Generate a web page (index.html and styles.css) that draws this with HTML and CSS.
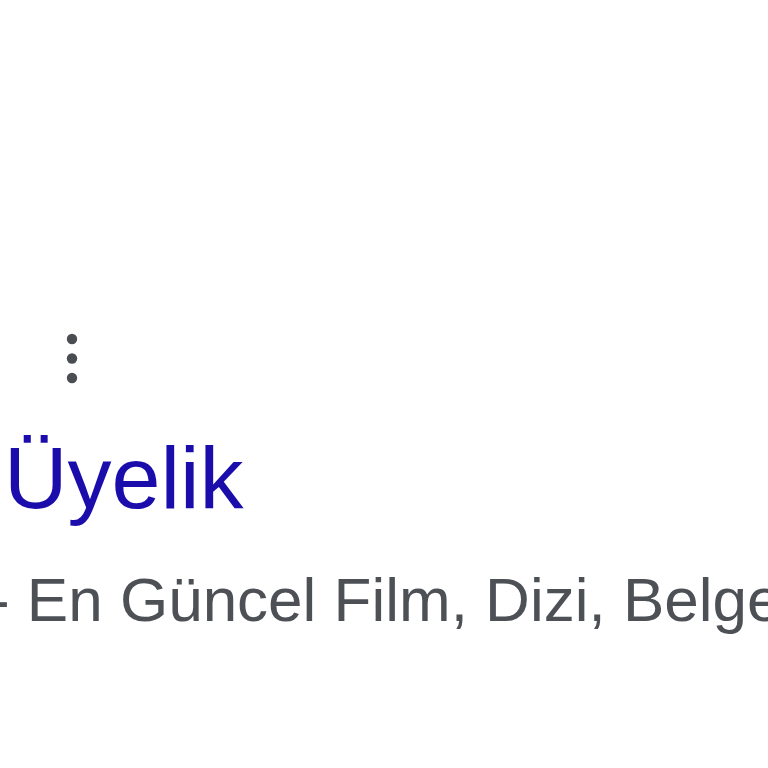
FILE: index.html
```html
<!DOCTYPE html>
<html lang="tr">
<head>
    <meta charset="UTF-8">
    <title>Üyelik</title>
    <link rel="stylesheet" href="styles.css">
</head>
<body>
    <div class="result">
        <div class="result-head">
            <span class="more" aria-label="Diğer seçenekler">
                <svg width="12" height="52" viewBox="0 0 12 52">
                    <circle cx="6" cy="6" r="5.2"/>
                    <circle cx="6" cy="25.5" r="5.2"/>
                    <circle cx="6" cy="45" r="5.2"/>
                </svg>
            </span>
        </div>
        <h3 class="title"><a href="#">Üyelik</a></h3>
        <p class="snippet">- En Güncel Film, Dizi, Belgesel ve Çocuk İçerikleri</p>
    </div>
</body>
</html>
```

FILE: styles.css
```css
body {
    margin: 0;
    background: #fff;
    font-family: "Liberation Sans", Arial, sans-serif;
    overflow: hidden;
}

.result {
    padding-top: 333px;
}

.result-head {
    padding-left: 66px;
    height: 52px;
    margin-bottom: 43px;
}

.more svg {
    display: block;
    fill: #4a4d52;
}

.title {
    margin: 0;
    padding-left: 4px;
    font-size: 88px;
    font-weight: normal;
    line-height: 100px;
    white-space: nowrap;
}

    .title a {
        color: #1a0dab;
        text-decoration: none;
    }

.snippet {
    margin: 35px 0 0 -11px;
    font-size: 62px;
    line-height: 74px;
    color: #4d5156;
    white-space: nowrap;
}
```
